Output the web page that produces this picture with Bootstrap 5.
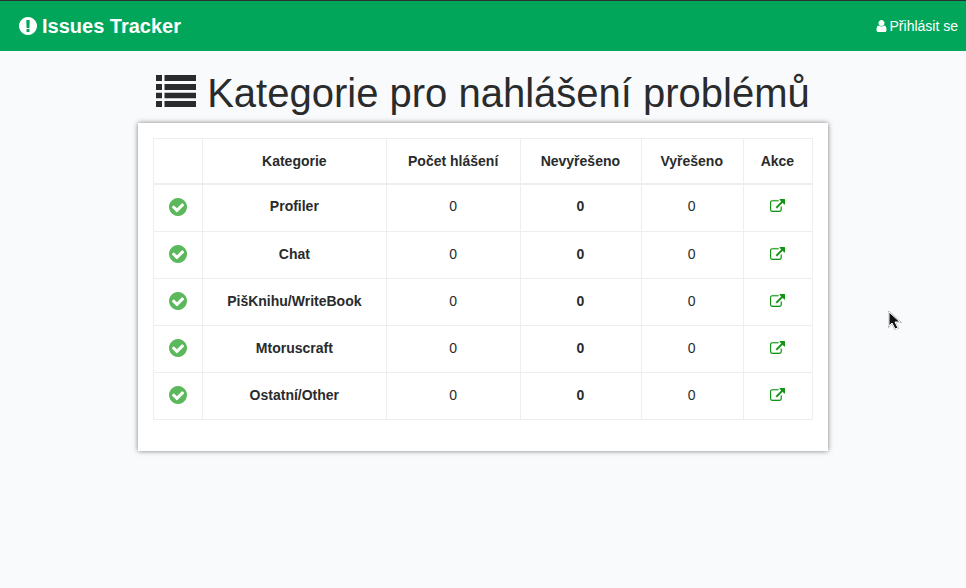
<!DOCTYPE html>
<html lang="cs">
<head>
<meta charset="utf-8">
<meta name="viewport" content="width=device-width, initial-scale=1">
<title>Issues Tracker</title>
<link href="https://cdn.jsdelivr.net/npm/bootstrap@5.3.0/dist/css/bootstrap.min.css" rel="stylesheet">
<style>
  body {
    font-family: "Liberation Sans", Arial, sans-serif;
    font-size: 14px;
    line-height: 21px;
    color: #292b2c;
    background: #f9fafc;
  }
  svg { fill: currentColor; }
  .site-bar {
    background: #02a65a;
    border-top: 1px solid #2b3130;
    padding: 10px 8px 10px 19px;
  }
  .site-bar .navbar-brand { font-size: 20px; line-height: 30px; padding: 0; gap: 5px; }
  .site-bar .nav-link { padding: 0; gap: 3px; }
  .site-main { --bs-gutter-x: 30px; padding-top: 18px; padding-bottom: 30px; }
  .page-title { font-size: 40px; line-height: 48px; font-weight: 400; margin-bottom: 6px; gap: 11px; }
  .page-title svg { margin-bottom: 4px; }
  .panel {
    background: #fff;
    padding: 15px;
    box-shadow: 0 0 5px rgba(0, 0, 0, .5);
  }
  .issues {
    --bs-table-bg: transparent;
    --bs-table-color: #292b2c;
    border-color: #eceeef;
    table-layout: fixed;
    margin-bottom: 16px;
  }
  .issues th, .issues td { padding: 0 5px 2px 4px; height: 47px; }
  .issues thead th { height: 45px; padding-top: 2px; padding-bottom: 0; border-bottom-width: 2px; }
  .issues tbody tr:first-child > * { height: 48px; }
  .issues svg { display: block; margin: 0 auto; }
  .issues .go svg { margin-bottom: 2px; }
  .c-state { width: 7.5%; }
  .c-name { width: 27.9%; }
  .c-total { width: 20.3%; }
  .c-open { width: 18.3%; }
  .c-done { width: 15.5%; }
  .c-act { width: 10.5%; }
  .ok { color: #5cb85c; }
  .go { color: #149414; display: block; }
  .go svg { stroke: currentColor; stroke-width: 20; }
  .pointer { left: 888px; top: 311px; pointer-events: none; }
</style>
<script src="https://cdn.jsdelivr.net/npm/bootstrap@5.3.0/dist/js/bootstrap.bundle.min.js" defer></script>
</head>
<body>
<svg class="d-none" aria-hidden="true">
  <symbol id="i-check" viewBox="128 128 1536 1536"><path d="M1412 734q0-28-18-46l-91-90q-19-19-45-19t-45 19l-408 407-226-226q-19-19-45-19t-45 19l-91 90q-18 18-18 46 0 27 18 45l362 362q19 19 45 19 27 0 46-19l543-543q18-18 18-45zm252 162q0 209-103 385.500t-279.500 279.500-385.500 103-385.500-103-279.500-279.500-103-385.500 103-385.500 279.500-279.500 385.500-103 385.500 103 279.500 279.500 103 385.500z"/></symbol>
  <symbol id="i-open" viewBox="0 0 1792 1536"><path d="M1408 928v320q0 119-84.500 203.500t-203.500 84.500h-832q-119 0-203.500-84.500t-84.500-203.500v-832q0-119 84.500-203.500t203.500-84.500h704q14 0 23 9t9 23v64q0 14-9 23t-23 9h-704q-66 0-113 47t-47 113v832q0 66 47 113t113 47h832q66 0 113-47t47-113v-320q0-14 9-23t23-9h64q14 0 23 9t9 23zm384-864v512q0 26-19 45t-45 19-45-19l-176-176-652 652q-10 10-23 10t-23-10l-114-114q-10-10-10-23t10-23l652-652-176-176q-19-19-19-45t19-45 45-19h512q26 0 45 19t19 45z"/></symbol>
</svg>

<nav class="navbar site-bar" data-bs-theme="dark">
  <a class="navbar-brand d-flex align-items-center fw-bold text-white m-0" href="#">
    <svg width="18" height="18" viewBox="128 128 1536 1536" aria-hidden="true"><path d="M896 128q209 0 385.500 103t279.500 279.500 103 385.500-103 385.500-279.500 279.500-385.500 103-385.500-103-279.500-279.500-103-385.500 103-385.500 279.500-279.500 385.500-103zm128 1247v-190q0-14-9-23.500t-22-9.500h-192q-13 0-23 10t-10 23v190q0 13 10 23t23 10h192q13 0 22-9.500t9-23.500zm-2-344l18-621q0-12-10-18-10-8-24-8h-220q-14 0-24 8-10 6-10 18l17 621q0 10 10 17.500t24 7.500h185q14 0 23.500-7.500t10.500-17.500z"/></svg>
    Issues Tracker
  </a>
  <a class="nav-link d-flex align-items-center text-white" href="#">
    <svg width="11" height="12" viewBox="256 128 1280 1536" aria-hidden="true"><path d="M1536 1399q0 109-62.500 187t-150.500 78h-854q-88 0-150.500-78t-62.500-187q0-85 8.500-160.500t31.500-152 58.500-131 94-89 134.500-34.500q131 128 313 128t313-128q76 0 134.500 34.500t94 89 58.500 131 31.500 152 8.500 160.500zm-256-887q0 159-112.500 271.500t-271.500 112.500-271.500-112.500-112.500-271.500 112.500-271.500 271.500-112.500 271.500 112.500 112.500 271.500z"/></svg>
    Přihlásit se
  </a>
</nav>

<main class="container site-main">
  <h1 class="page-title d-flex justify-content-center align-items-center">
    <svg class="flex-shrink-0" width="40" height="34" viewBox="0 0 40 34" aria-hidden="true">
      <path d="M0 1h6v6H0zM8.500 1H40v6H8.500zM0 10h6v6H0zM8.500 10H40v6H8.500zM0 18.700h6v5.500H0zM8.500 18.700H40v5.500H8.500zM0 27h6v6H0zM8.500 27H40v6H8.500z"/>
    </svg>
    Kategorie pro nahlášení problémů
  </h1>

  <section class="panel">
    <table class="table table-bordered issues text-center align-middle">
      <thead class="align-middle">
        <tr>
          <th class="c-state" scope="col"></th>
          <th class="c-name" scope="col">Kategorie</th>
          <th class="c-total" scope="col">Počet hlášení</th>
          <th class="c-open" scope="col">Nevyřešeno</th>
          <th class="c-done" scope="col">Vyřešeno</th>
          <th class="c-act" scope="col">Akce</th>
        </tr>
      </thead>
      <tbody>
        <tr>
          <td class="ok"><svg width="18" height="18"><use href="#i-check"/></svg></td>
          <th scope="row">Profiler</th><td>0</td><td class="fw-bold">0</td><td>0</td>
          <td><a class="go" href="#" aria-label="Profiler"><svg width="15" height="13"><use href="#i-open"/></svg></a></td>
        </tr>
        <tr>
          <td class="ok"><svg width="18" height="18"><use href="#i-check"/></svg></td>
          <th scope="row">Chat</th><td>0</td><td class="fw-bold">0</td><td>0</td>
          <td><a class="go" href="#" aria-label="Chat"><svg width="15" height="13"><use href="#i-open"/></svg></a></td>
        </tr>
        <tr>
          <td class="ok"><svg width="18" height="18"><use href="#i-check"/></svg></td>
          <th scope="row">PišKnihu/WriteBook</th><td>0</td><td class="fw-bold">0</td><td>0</td>
          <td><a class="go" href="#" aria-label="PišKnihu/WriteBook"><svg width="15" height="13"><use href="#i-open"/></svg></a></td>
        </tr>
        <tr>
          <td class="ok"><svg width="18" height="18"><use href="#i-check"/></svg></td>
          <th scope="row">Mtoruscraft</th><td>0</td><td class="fw-bold">0</td><td>0</td>
          <td><a class="go" href="#" aria-label="Mtoruscraft"><svg width="15" height="13"><use href="#i-open"/></svg></a></td>
        </tr>
        <tr>
          <td class="ok"><svg width="18" height="18"><use href="#i-check"/></svg></td>
          <th scope="row">Ostatní/Other</th><td>0</td><td class="fw-bold">0</td><td>0</td>
          <td><a class="go" href="#" aria-label="Ostatní/Other"><svg width="15" height="13"><use href="#i-open"/></svg></a></td>
        </tr>
      </tbody>
    </table>
  </section>
</main>

<svg class="pointer position-absolute" width="14" height="20" viewBox="0 0 14 20" aria-hidden="true">
  <path d="M1 1v14l3-3 3 6 3-1-3-6h5z" fill="#111" stroke="#bbb" stroke-width="2"/>
  <path d="M1 1v14l3-3 3 6 3-1-3-6h5z" fill="#111" stroke="#fff" stroke-width="1"/>
</svg>
</body>
</html>
